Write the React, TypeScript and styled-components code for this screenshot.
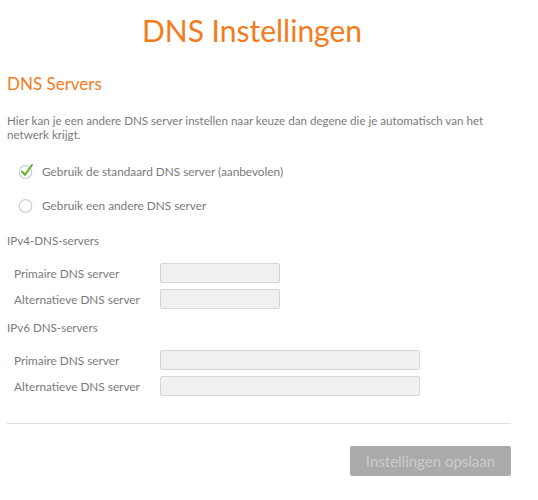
import { FunctionComponent } from 'react';
import styled, { createGlobalStyle } from 'styled-components';

const GlobalStyle = createGlobalStyle`
  body {
    margin: 0;
    background: #fff;
    font-family: Lato, 'Open Sans', sans-serif;
    color: #7a7a7a;
  }
`;

const Page = styled.div`
  width: 504px;
  padding: 0 27px 0 7px;
`;

const Title = styled.h1`
  margin: 0;
  padding: 10px 14px 0 0;
  height: 46px;
  text-align: center;
  font-size: 30px;
  font-weight: 400;
  color: #f47b1c;
  line-height: 40px;
`;

const SectionTitle = styled.h2`
  margin: 17px 0 0;
  font-size: 17px;
  font-weight: 400;
  line-height: 22px;
  color: #f47b1c;
`;

const Intro = styled.p`
  margin: 19px 0 0;
  font-size: 11.6px;
  line-height: 14px;
  color: #7a7a7a;
`;

const RadioList = styled.div`
  display: flex;
  flex-direction: column;
  gap: 18px;
  margin: 21px 0 0 11px;
`;

const RadioRow = styled.label`
  display: flex;
  align-items: center;
  gap: 8px;
  height: 16px;
  font-size: 11.8px;
  color: #7a7a7a;
`;

const GroupTitle = styled.h3<{ $spacing: number }>`
  margin: ${(p) => p.$spacing}px 0 0;
  font-size: 11.6px;
  font-weight: 400;
  line-height: 16px;
  color: #7a7a7a;
`;

const FieldGrid = styled.div`
  display: grid;
  grid-template-columns: 146px auto;
  row-gap: 6px;
  margin-top: 14px;
  padding-left: 7px;
  align-items: center;
`;

const FieldLabel = styled.span`
  font-size: 11.8px;
  color: #7a7a7a;
`;

const TextInput = styled.div<{ $wide?: boolean }>`
  box-sizing: border-box;
  width: ${(p) => (p.$wide ? '260px' : '120px')};
  height: 20px;
  background: #f1f1f1;
  border: 1px solid #d6d6d6;
  border-radius: 2px;
`;

const Divider = styled.hr`
  margin: 27px 0 0;
  border: 0;
  border-top: 1px solid #dedede;
`;

const Footer = styled.div`
  display: flex;
  justify-content: flex-end;
  padding-top: 22px;
`;

const SaveButton = styled.button`
  width: 161px;
  height: 30px;
  background: #aaa;
  border: 0;
  border-radius: 2px;
  color: #cacaca;
  font-family: inherit;
  font-size: 15px;
  cursor: default;
`;

const RadioIcon: FunctionComponent<{ checked?: boolean }> = ({ checked }) => (
  <svg width="16" height="18" viewBox="0 0 16 18">
    <circle cx="7.5" cy="10" r="6.3" fill="#fff" stroke="#cfcfcf" strokeWidth="1.2" />
    {checked && (
      <path
        d="M4 9.5 L7 12.8 L14 3"
        fill="none"
        stroke="#5fae2e"
        strokeWidth="2"
        strokeLinecap="round"
        strokeLinejoin="round"
      />
    )}
  </svg>
);

const App: FunctionComponent = () => {
  return (
    <Page>
      <GlobalStyle />
      <Title>DNS Instellingen</Title>
      <SectionTitle>DNS Servers</SectionTitle>
      <Intro>
        Hier kan je een andere DNS server instellen naar keuze dan degene die je automatisch van het
        netwerk krijgt.
      </Intro>
      <RadioList>
        <RadioRow>
          <RadioIcon checked />
          Gebruik de standaard DNS server (aanbevolen)
        </RadioRow>
        <RadioRow>
          <RadioIcon />
          Gebruik een andere DNS server
        </RadioRow>
      </RadioList>

      <GroupTitle $spacing={20}>IPv4-DNS-servers</GroupTitle>
      <FieldGrid>
        <FieldLabel>Primaire DNS server</FieldLabel>
        <TextInput />
        <FieldLabel>Alternatieve DNS server</FieldLabel>
        <TextInput />
      </FieldGrid>

      <GroupTitle $spacing={11}>IPv6 DNS-servers</GroupTitle>
      <FieldGrid>
        <FieldLabel>Primaire DNS server</FieldLabel>
        <TextInput $wide />
        <FieldLabel>Alternatieve DNS server</FieldLabel>
        <TextInput $wide />
      </FieldGrid>

      <Divider />
      <Footer>
        <SaveButton disabled>Instellingen opslaan</SaveButton>
      </Footer>
    </Page>
  );
};

export default App;
